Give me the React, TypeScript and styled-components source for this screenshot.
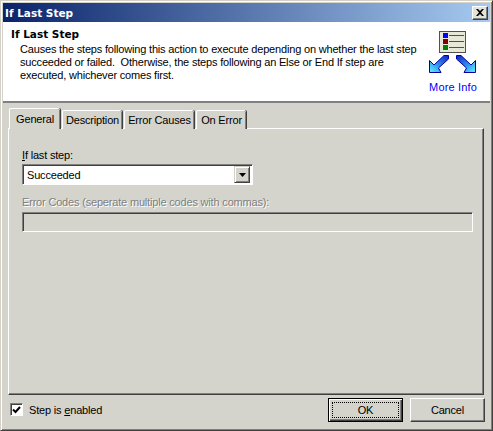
import React from "react";
import styled, { createGlobalStyle } from "styled-components";

const Global = createGlobalStyle`
  html, body { margin: 0; padding: 0; background: #d4d3cc; }
  body { font-family: "Liberation Sans", Arial, sans-serif; font-size: 11px; letter-spacing: -0.18px; color: #000; }
`;

const Win = styled.div`
  width: 493px; height: 431px; box-sizing: border-box; background: #d4d3cc;
  display: flex; flex-direction: column; padding: 2px 3px 3px 3px;
  border: 1px solid; border-color: #d4d0c8 #404040 #404040 #d4d0c8;
  box-shadow: inset 1px 1px 0 #fff, inset -1px -1px 0 #808080;
`;
const BoldText = styled.span`
  font-family: "DejaVu Sans", sans-serif; font-weight: bold; font-size: 10.5px; letter-spacing: 0;
`;
const TitleBar = styled.div`
  height: 19px; flex: none; display: flex; align-items: center; justify-content: space-between;
  padding: 0 2px 0 2px; margin: 0 -1px 0 -1px;
  background: linear-gradient(to right, #0a246a, #a6caf0);
  color: #fff;
`;
const CloseBtn = styled.div`
  width: 16px; height: 14px; box-sizing: border-box; background: #e4e3d8;
  border: 1px solid; border-color: #fff #404040 #404040 #fff;
  box-shadow: inset -1px -1px 0 #808080;
  display: flex; align-items: center; justify-content: center;
`;
const Header = styled.div`
  flex: none; background: #fff; display: flex; margin: 0 -1px;
  padding: 5px 12px 0 8px; box-sizing: border-box; justify-content: space-between;
  border-bottom: 2px solid #808080; height: 81px;
`;
const HeaderText = styled.div`display: flex; flex-direction: column;`;
const HeaderTitle = styled(BoldText)`line-height: 15px;`;
const HeaderDesc = styled.div`margin: 1px 0 0 9px; line-height: 13px; width: 400px; white-space: pre;`;
const MoreInfo = styled.div`display: flex; flex: none; flex-direction: column; align-items: center; width: 50px; margin-top: 4px;`;
const MoreLink = styled.span`color: #0000ff; margin-top: 5px; white-space: nowrap; line-height: 14px; letter-spacing: 0.15px;`;

const Body = styled.div`
  flex: 1; display: flex; flex-direction: column; padding: 5px 5px 0 4px; min-height: 0;
`;
const Tabs = styled.div`display: flex; align-items: flex-end; padding-left: 1px; height: 21px; margin-bottom: -1px; position: relative; z-index: 1;`;
const Tab = styled.div<{ $active?: boolean; $w: number }>`
  box-sizing: border-box; width: ${p => p.$w}px; height: ${p => (p.$active ? 21 : 19)}px;
  padding-bottom: 1px; display: flex; align-items: center; justify-content: center;
  background: #d4d3cc; white-space: nowrap;
  border: 1px solid #fff; border-width: 1px 0 0 1px; border-radius: 2px 2px 0 0;
  box-shadow: inset -1px 0 0 #808080, 1px 0 0 #404040;
  margin-right: 2px;
`;
const Panel = styled.div`
  box-sizing: border-box; height: 267px; flex: none; padding: 20px 13px 0 13px;
  background: #d4d3cc; border: 1px solid; border-color: #fff #404040 #404040 #fff;
  box-shadow: inset -1px -1px 0 #808080;
`;
const Label = styled.div<{ $disabled?: boolean }>`
  line-height: 13px; color: ${p => (p.$disabled ? "#808080" : "#000")};
  text-shadow: ${p => (p.$disabled ? "1px 1px 0 #fff" : "none")};
`;
const Combo = styled.div`
  width: 231px; height: 21px; box-sizing: border-box; margin-top: 2px; background: #fff;
  display: flex; align-items: center; justify-content: space-between; padding: 0 2px 0 4px;
  border: 1px solid; border-color: #808080 #fff #fff #808080; box-shadow: inset 1px 1px 0 #404040;
`;
const ComboArrow = styled.div`
  width: 16px; height: 17px; box-sizing: border-box; background: #d4d3cc;
  border: 1px solid; border-color: #d4d0c8 #404040 #404040 #d4d0c8;
  box-shadow: inset 1px 1px 0 #fff, inset -1px -1px 0 #808080;
  display: flex; align-items: center; justify-content: center;
`;
const CodesField = styled.div`
  height: 20px; box-sizing: border-box; margin-top: 3px; background: #d4d3cc; width: 451px;
  border: 1px solid; border-color: #808080 #fff #fff #808080; box-shadow: inset 1px 1px 0 #404040;
`;
const CodesLabel = styled(Label)`margin-top: 11px;`;
const Footer = styled.div`
  flex: 1; display: flex; justify-content: space-between; align-items: center; padding: 0 0 3px 2px;
`;
const Check = styled.label`display: flex; align-items: center; gap: 6px;`;
const Box = styled.div`
  width: 13px; height: 13px; box-sizing: border-box; background: #fff;
  border: 1px solid; border-color: #808080 #fff #fff #808080; box-shadow: inset 1px 1px 0 #404040;
  display: flex; align-items: center; justify-content: center;
`;
const Buttons = styled.div`display: flex; gap: 7px; margin-right: -1px;`;
const Btn = styled.div<{ $default?: boolean }>`
  width: 75px; height: 24px; box-sizing: border-box; display: flex; align-items: center; justify-content: center;
  background: #d4d3cc; position: relative;
  border: 1px solid ${p => (p.$default ? "#000" : "#fff")};
  ${p => p.$default
    ? `box-shadow: inset 1px 1px 0 #fff, inset -1px -1px 0 #404040, inset -2px -2px 0 #808080;`
    : `border-color: #fff #404040 #404040 #fff; box-shadow: inset -1px -1px 0 #808080;`}
`;
const Focus = styled.div`
  position: absolute; inset: 3px; border: 1px dotted #000;
`;

const ARROW = "M1.500 29.500 L6 34 L16 24.500 L20.500 24.500 L20.500 28 L10.500 37 L13 41.500 L1.500 41.500 Z";

const InfoIcon = () => (
  <svg width="50" height="44" viewBox="0 0 50 44" style={{ display: "block" }}>
    <defs>
      <linearGradient id="ag" x1="1" y1="0" x2="0" y2="1">
        <stop offset="0" stopColor="#1020c0" />
        <stop offset="0.55" stopColor="#3090f0" />
        <stop offset="1" stopColor="#60f8ff" />
      </linearGradient>
    </defs>
    <rect x="11.500" y="0.500" width="26" height="21" fill="#e8e8d8" stroke="#505050" />
    <rect x="15" y="2" width="5" height="5" fill="#0000ff" />
    <rect x="15" y="8" width="5" height="5" fill="#800000" />
    <rect x="15" y="14" width="5" height="5" fill="#008000" />
    <path d="M21 4.500H36M21 10.500H36M21 16.500H36" stroke="#505050" />
    <path d={ARROW} fill="url(#ag)" stroke="#0000a0" />
    <g transform="translate(49 0) scale(-1 1)">
      <path d={ARROW} fill="url(#ag)" stroke="#0000a0" />
    </g>
  </svg>
);

export default function App() {
  return (
    <Win>
      <Global />
      <TitleBar>
        <BoldText>If Last Step</BoldText>
        <CloseBtn>
          <svg width="8" height="7" viewBox="0 0 8 7"><path d="M0 0h2l2 2 2-2h2L5 3.500 8 7H6L4 5 2 7H0l3-3.500z" fill="#000" /></svg>
        </CloseBtn>
      </TitleBar>
      <Header>
        <HeaderText>
          <HeaderTitle>If Last Step</HeaderTitle>
          <HeaderDesc>
            {"Causes the steps following this action to execute depending on whether the last step\nsucceeded or failed.  Otherwise, the steps following an Else or End If step are\nexecuted, whichever comes first."}
          </HeaderDesc>
        </HeaderText>
        <MoreInfo>
          <InfoIcon />
          <MoreLink>More Info</MoreLink>
        </MoreInfo>
      </Header>
      <Body>
        <Tabs>
          <Tab $active $w={51}>General</Tab>
          <Tab $w={60}>Description</Tab>
          <Tab $w={70}>Error Causes</Tab>
          <Tab $w={50}>On Error</Tab>
        </Tabs>
        <Panel>
          <Label><u>I</u>f last step:</Label>
          <Combo>
            Succeeded
            <ComboArrow>
              <svg width="7" height="4" viewBox="0 0 7 4"><path d="M0 0h7L3.500 4z" fill="#000" /></svg>
            </ComboArrow>
          </Combo>
          <CodesLabel $disabled>Error Codes (seperate multiple codes with commas):</CodesLabel>
          <CodesField />
        </Panel>
        <Footer>
          <Check>
            <Box>
              <svg width="9" height="8" viewBox="0 0 9 8"><path d="M1 3.500L3.500 6 8 1" fill="none" stroke="#000" strokeWidth="2" /></svg>
            </Box>
            <span>Step is <u>e</u>nabled</span>
          </Check>
          <Buttons>
            <Btn $default><Focus />OK</Btn>
            <Btn>Cancel</Btn>
          </Buttons>
        </Footer>
      </Body>
    </Win>
  );
}
